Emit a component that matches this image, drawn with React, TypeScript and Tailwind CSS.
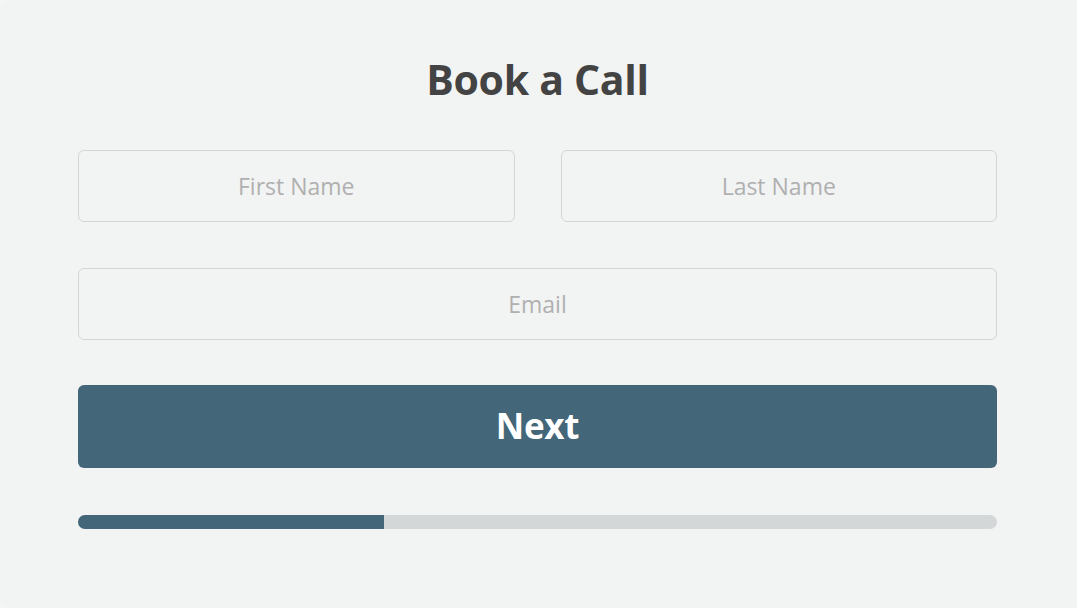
import { useState } from 'react';

export default function App() {
  const [step] = useState(1);
  const progress = (step / 3) * 100;

  return (
    <div className="h-[608px] w-full bg-[#f4f5f5] font-['Open_Sans',sans-serif]">
      <div className="flex h-full flex-col rounded-lg bg-[#f2f3f3] pl-[78px] pr-[80px] pt-[49px]">
        <h1 className="text-center text-[41px] font-bold leading-[60px] tracking-[-0.3px] text-[#434343]">
          Book a Call
        </h1>

        <form className="mt-[41px] flex flex-col" onSubmit={(e) => e.preventDefault()}>
          <div className="grid grid-cols-2 gap-[46px]">
            <input
              type="text"
              placeholder="First Name"
              className="h-[72px] rounded-md border border-[#d3d6d6] bg-transparent text-center text-[23px] text-[#444] outline-none placeholder:text-[#b0b0b0]"
            />
            <input
              type="text"
              placeholder="Last Name"
              className="h-[72px] rounded-md border border-[#d3d6d6] bg-transparent text-center text-[23px] text-[#444] outline-none placeholder:text-[#b0b0b0]"
            />
          </div>

          <input
            type="email"
            placeholder="Email"
            className="mt-[46px] h-[72px] rounded-md border border-[#d3d6d6] bg-transparent text-center text-[23px] text-[#444] outline-none placeholder:text-[#b0b0b0]"
          />

          <button
            type="submit"
            className="mt-[45px] h-[83px] rounded-md bg-[#436679] text-[35px] font-bold tracking-[-0.3px] text-white"
          >
            Next
          </button>

          <div className="mt-[47px] h-[14px] w-full overflow-hidden rounded-full bg-[#d4d7d8]">
            <div className="h-full bg-[#436679]" style={{ width: `${progress}%` }} />
          </div>
        </form>
      </div>
    </div>
  );
}
